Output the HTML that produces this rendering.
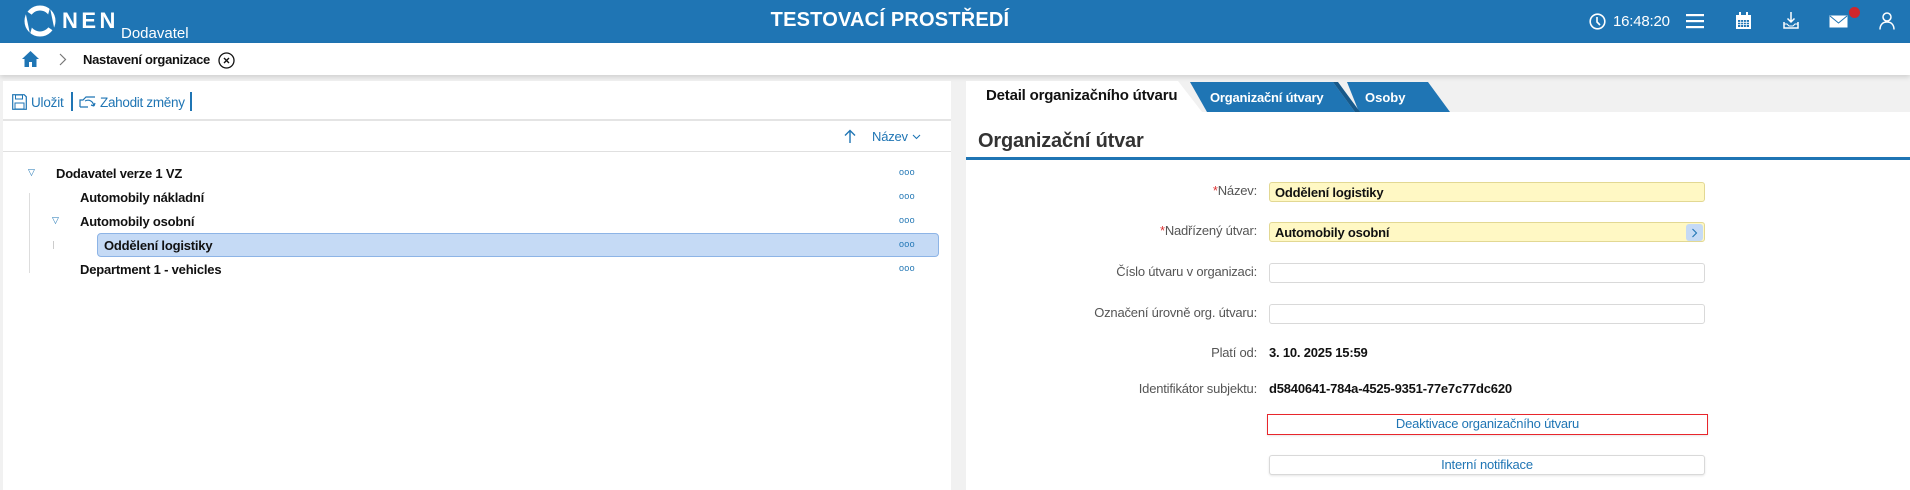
<!DOCTYPE html>
<html><head><meta charset="utf-8">
<style>
*{box-sizing:border-box;margin:0;padding:0}
body{width:1910px;height:490px;overflow:hidden;background:#f1f1f1;font-family:"Liberation Sans",sans-serif;position:relative;color:#111}
.a{position:absolute}
.hdr{left:0;top:0;width:1910px;height:43px;background:#1f75b4}
.bc{left:0;top:43px;width:1910px;height:32px;background:#fff;box-shadow:0 2px 5px rgba(0,0,0,.15)}
.lp{left:3px;top:81px;width:948px;height:409px;background:#fff}
.rp{left:966px;top:112px;width:944px;height:378px;background:#fff}
.tr{font-size:13px;font-weight:bold;letter-spacing:-.2px;color:#111;white-space:nowrap}
.dots{font-size:9px;color:#1f75b4;letter-spacing:.3px}
.lbl{font-size:13px;color:#555;text-align:right;width:300px;left:957px;white-space:nowrap;letter-spacing:-.2px}
.inp{left:1269px;width:436px;height:20px;border:1px solid #d9d9d9;border-radius:3px;background:#fff}
.yel{background:#fff8c4;border-color:#e2d893}
.it{font-size:13px;font-weight:bold;padding:2px 0 0 5px;white-space:nowrap;letter-spacing:-.2px}
.btn{left:1269px;width:436px;height:20px;border:1px solid #d9d9d9;border-radius:3px;background:#fff;color:#1f75b4;font-size:13px;text-align:center;line-height:18px;box-shadow:0 1px 2px rgba(0,0,0,.1);letter-spacing:-.2px}
.req{color:#d33}
</style></head><body>
<div class="a hdr"></div>
<svg class="a" style="left:22px;top:4px" width="36" height="34" viewBox="0 0 36 34">
<circle cx="18" cy="17" r="13" fill="none" stroke="#fff" stroke-width="5"/>
<path d="M3 6 L13 13 L8 30 Z" fill="#1f75b4"/>
<path d="M33 28 L23 21 L28 4 Z" fill="#1f75b4"/>
</svg>
<div class="a" style="left:62px;top:8px;color:#fff;font-size:22px;font-weight:bold;letter-spacing:3.5px">NEN</div>
<div class="a" style="left:121px;top:25px;color:#fff;font-size:15px">Dodavatel</div>
<div class="a" style="left:700px;width:380px;text-align:center;top:9px;color:#fff;font-size:20px;font-weight:bold;letter-spacing:.2px">TESTOVACÍ PROSTŘEDÍ</div>
<svg class="a" style="left:1589px;top:13px" width="17" height="17" viewBox="0 0 17 17"><circle cx="8.5" cy="8.5" r="7.3" fill="none" stroke="#fff" stroke-width="1.6"/><path d="M8 4v5l3 3" fill="none" stroke="#fff" stroke-width="1.6"/></svg>
<div class="a" style="left:1613px;top:13px;color:#fff;font-size:15px;letter-spacing:-.2px">16:48:20</div>
<svg class="a" style="left:1686px;top:14px" width="18" height="15"><rect y="0" width="18" height="2.2" fill="#fff"/><rect y="6" width="18" height="2.2" fill="#fff"/><rect y="12" width="18" height="2.2" fill="#fff"/></svg>
<svg class="a" style="left:1735px;top:12px" width="17" height="18" viewBox="0 0 17 18"><rect x="1" y="3" width="15" height="14" fill="#fff"/><rect x="3" y="8" width="11" height="7" fill="#1f75b4"/><path d="M3 10.3h11M3 12.6h11M5.7 8v7M8.5 8v7M11.3 8v7" stroke="#fff" stroke-width=".8"/><rect x="4" y="0" width="2" height="5" fill="#fff"/><rect x="11" y="0" width="2" height="5" fill="#fff"/></svg>
<svg class="a" style="left:1783px;top:12px" width="16" height="18" viewBox="0 0 16 18"><path d="M8 0v10M4.5 6.5L8 10l3.5-3.5" fill="none" stroke="#fff" stroke-width="1.5"/><path d="M1 10v6h14v-6" fill="none" stroke="#fff" stroke-width="1.5"/><path d="M1 12h3l2 2h4l2-2h3" fill="none" stroke="#fff" stroke-width="1"/></svg>
<svg class="a" style="left:1829px;top:15px" width="19" height="13" viewBox="0 0 19 13"><rect x="0.5" y="0.5" width="18" height="12" fill="#fff"/><path d="M1 1l8.5 7L18 1" fill="none" stroke="#1f75b4" stroke-width="1"/></svg>
<div class="a" style="left:1849px;top:7px;width:11px;height:11px;border-radius:50%;background:#d0262c"></div>
<svg class="a" style="left:1879px;top:12px" width="16" height="18" viewBox="0 0 16 18"><circle cx="8" cy="5" r="4" fill="none" stroke="#fff" stroke-width="1.5"/><path d="M1 17.5c0-5 3-7.5 7-7.5s7 2.5 7 7.5" fill="none" stroke="#fff" stroke-width="1.5"/></svg>

<div class="a bc"></div>
<svg class="a" style="left:22px;top:51px" width="17" height="16" viewBox="0 0 17 16"><path d="M8.5 0L0 8h2.5v8h4.5v-5h3v5h4.5V8H17z" fill="#1f75b4"/></svg>
<svg class="a" style="left:59px;top:53px" width="8" height="13"><path d="M1 1l5.5 5.5L1 12" fill="none" stroke="#777" stroke-width="1.2"/></svg>
<div class="a" style="left:83px;top:52px;font-size:13px;font-weight:bold;letter-spacing:-.3px">Nastavení organizace</div>
<svg class="a" style="left:218px;top:52px" width="17" height="17" viewBox="0 0 17 17"><circle cx="8.5" cy="8.5" r="7.5" fill="none" stroke="#111" stroke-width="1.3"/><path d="M6 6l5 5M11 6l-5 5" stroke="#111" stroke-width="1.4"/></svg>

<div class="a lp"></div>
<svg class="a" style="left:12px;top:94px" width="15" height="16" viewBox="0 0 15 16"><path d="M.7.7h11.5l2.1 2.1v12.5H.7z" fill="none" stroke="#1f75b4" stroke-width="1.2"/><rect x="3.5" y="1" width="7" height="4" fill="none" stroke="#1f75b4"/><rect x="3" y="9" width="9" height="6" fill="none" stroke="#1f75b4"/></svg>
<div class="a" style="left:31px;top:95px;font-size:13.5px;color:#1f75b4;letter-spacing:-.2px">Uložit</div>
<div class="a" style="left:71px;top:92px;width:1.5px;height:19px;background:#1f75b4"></div>
<svg class="a" style="left:79px;top:96px" width="17" height="12" viewBox="0 0 17 12"><path d="M1 11V4h3l3-3h9M1 11h8" fill="none" stroke="#1f75b4" stroke-width="1.2"/><path d="M6 5c4-2 8 0 9 5M15 10l-3-1M15 10l1-3" fill="none" stroke="#1f75b4" stroke-width="1.2"/></svg>
<div class="a" style="left:100px;top:95px;font-size:13.5px;color:#1f75b4;letter-spacing:-.3px">Zahodit změny</div>
<div class="a" style="left:190px;top:92px;width:1.5px;height:19px;background:#1f75b4"></div>
<div class="a" style="left:3px;top:119px;width:948px;height:2px;background:#e4e4e4"></div>
<svg class="a" style="left:844px;top:129px" width="12" height="14"><path d="M6 14V1.5M1 6.5l5-5 5 5" fill="none" stroke="#1f75b4" stroke-width="1.4"/></svg>
<div class="a" style="left:872px;top:129px;font-size:13px;color:#1f75b4;letter-spacing:-.2px">Název</div>
<svg class="a" style="left:912px;top:134px" width="9" height="6"><path d="M1 1l3.5 3.5L8 1" fill="none" stroke="#1f75b4" stroke-width="1.1"/></svg>
<div class="a" style="left:3px;top:151px;width:948px;height:1px;background:#e0e0e0"></div>

<div class="a" style="left:29px;top:193px;width:1px;height:80px;background:#ddd"></div>
<div class="a" style="left:53px;top:241px;width:1px;height:8px;background:#ccc"></div>
<div class="a" style="left:97px;top:233px;width:842px;height:24px;background:#c5daf5;border:1px solid #8db4e6;border-radius:4px"></div>
<div class="a" style="left:28px;top:167px;font-size:9px;color:#1f75b4">▽</div>
<div class="a" style="left:52px;top:215px;font-size:9px;color:#1f75b4">▽</div>
<div class="a tr" style="left:56px;top:166px">Dodavatel verze 1 VZ</div>
<div class="a tr" style="left:80px;top:190px">Automobily nákladní</div>
<div class="a tr" style="left:80px;top:214px">Automobily osobní</div>
<div class="a tr" style="left:104px;top:238px">Oddělení logistiky</div>
<div class="a tr" style="left:80px;top:262px">Department 1 - vehicles</div>
<div class="a dots" style="left:899px;top:167px">ooo</div>
<div class="a dots" style="left:899px;top:191px">ooo</div>
<div class="a dots" style="left:899px;top:215px">ooo</div>
<div class="a dots" style="left:899px;top:239px">ooo</div>
<div class="a dots" style="left:899px;top:263px">ooo</div>

<svg class="a" style="left:966px;top:81px" width="490" height="32">
<polygon points="0,0 212,0 236,31 0,31" fill="#fff"/>
<polygon points="226,1 370,1 395,31 241,31" fill="#9ab" opacity=".35"/>
<polygon points="224,1 367,1 389,31 241,31" fill="#1f75b4"/>
<polygon points="381,1 462,1 484,31 393,31" fill="#1f75b4"/>
<polygon points="367,1 372,1 394,31 389,31" fill="#17598a"/>
</svg>
<div class="a rp"></div>
<div class="a" style="left:986px;top:87px;font-size:15px;font-weight:bold;letter-spacing:-.2px">Detail organizačního útvaru</div>
<div class="a" style="left:1210px;top:90px;font-size:13px;font-weight:bold;color:#fff;letter-spacing:-.2px">Organizační útvary</div>
<div class="a" style="left:1365px;top:90px;font-size:13px;font-weight:bold;color:#fff">Osoby</div>
<div class="a" style="left:978px;top:130px;font-size:20px;font-weight:bold;color:#333;letter-spacing:-.2px">Organizační útvar</div>
<div class="a" style="left:966px;top:157px;width:944px;height:3px;background:#1f75b4"></div>

<div class="a lbl" style="top:183px"><span class="req">*</span>Název:</div>
<div class="a inp yel" style="top:182px"><div class="it">Oddělení logistiky</div></div>
<div class="a lbl" style="top:223px"><span class="req">*</span>Nadřízený útvar:</div>
<div class="a inp yel" style="top:222px"><div class="it">Automobily osobní</div></div>
<div class="a" style="left:1686px;top:224px;width:17px;height:17px;background:#c5daf5;border-radius:3px"></div>
<svg class="a" style="left:1691px;top:228px" width="7" height="10"><path d="M1.5 1l4 4-4 4" fill="none" stroke="#1f75b4" stroke-width="1.1"/></svg>
<div class="a lbl" style="top:264px">Číslo útvaru v organizaci:</div>
<div class="a inp" style="top:263px"></div>
<div class="a lbl" style="top:305px">Označení úrovně org. útvaru:</div>
<div class="a inp" style="top:304px"></div>
<div class="a lbl" style="top:345px">Platí od:</div>
<div class="a tr" style="left:1269px;top:345px">3. 10. 2025 15:59</div>
<div class="a lbl" style="top:381px">Identifikátor subjektu:</div>
<div class="a tr" style="left:1269px;top:381px">d5840641-784a-4525-9351-77e7c77dc620</div>
<div class="a btn" style="left:1267px;width:441px;top:414px;height:21px;border:1px solid #e8262c;border-radius:0">Deaktivace organizačního útvaru</div>
<div class="a btn" style="top:455px">Interní notifikace</div>
</body></html>
